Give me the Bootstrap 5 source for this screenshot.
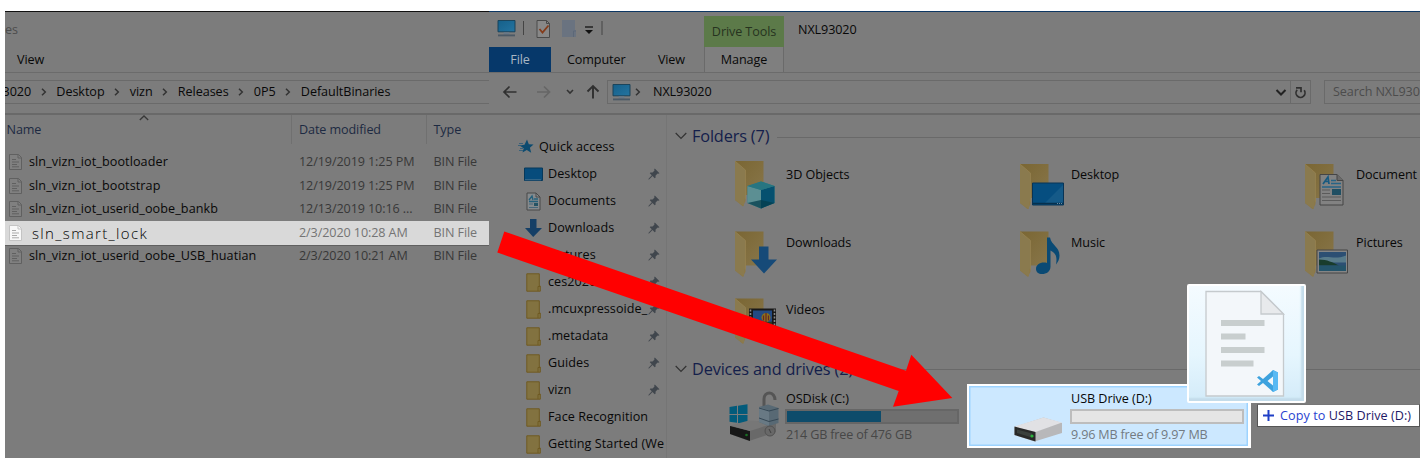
<!DOCTYPE html>
<html lang="en">
<head>
<meta charset="utf-8">
<meta name="viewport" content="width=device-width, initial-scale=1">
<title>Copy file to USB Drive (D:)</title>
<link href="https://cdn.jsdelivr.net/npm/bootstrap@5.3.0/dist/css/bootstrap.min.css" rel="stylesheet">
<style>
  body { background:#fff; font-family:"Open Sans","Noto Sans",sans-serif; font-size:12.6px; letter-spacing:-.1px; line-height:18px; color:#080808; overflow:hidden; white-space:nowrap; }
  svg { display:block; flex:none; }
  .stage { width:1415px; height:447px; margin:11px 0 0 5px; background:#7c7c7c; }
  .win-src { width:484px; border-top:1px solid #111; }
  .win-dst { width:931px; border-top:1px solid #0d3763; }
  .title-row { height:35px; }
  .win-title { margin-left:14px; }
  .tab-row { height:26px; border-bottom:1px solid #6b6b6b; }
  .nav-row { height:42px; padding:7px 0 10px; border-bottom:2px solid #696969; }
  .addr { border:1px solid #6a6a6a; height:24px; }
  .addr-path { width:704px; }
  .addr-search { margin-left:13px; }
  .win-src .addr { border-left:0; border-right:0; width:484px; }
  .crumb { gap:9.600px; letter-spacing:-.05px; }
  .crumb span:first-child { margin-left:-2.5px; }
  .c-dim { color:#4c4c4c; }
  .c-blue { color:#1d2a42; }
  .col-name { width:287px; }
  .col-date { width:134.5px; }
  .cell { padding-left:7px; }
  .head-row { height:29px; }
  .head-row .sep { border-right:1px solid #707070; }
  .head-row .lbl-col { padding-top:6px; }
  .head-row .lbl-name { padding-left:1.5px; }
  .sort-mark { margin:0 0 0 98px; }
  .file-list { padding-top:6.3px; }
  .file-row { height:23.6px; }
  .file-row .col-name { padding-left:4px; gap:7px; }
  .file-row .fname { letter-spacing:.09px; }
  .file-row .fdate, .file-row .ftype { color:#383838; }
  .file-row.picked { background:#d9d9d9; box-shadow:0 1px 0 #606060; }
  .file-row.picked .fdate, .file-row.picked .ftype { color:#747474; }
  .file-row.picked .fname { font-weight:300; font-size:15px; letter-spacing:1.350px; margin-left:3px; color:#000; }
  .tab-file { width:62px; background:#06386a; color:#a9b6c2; }
  .tab-view { margin-right:19px; }
  .drive-tools { width:80px; height:31px; background:#5c7a49; color:#26331f; }
  .tab-manage { width:80px; border-left:1px solid #6a6a6a; border-right:1px solid #6a6a6a; background:#7f7f7f; }
  .tab-fill { width:636px; }
  .side { width:178px; border-right:1px solid #757575; padding-top:18.5px; height:343px; overflow:hidden; letter-spacing:.07px; }
  .side-row { height:27px; padding-left:35px; padding-right:6px; }
  .side-row .ic { width:24px; flex:none; }
  .side-row .ic-fold { margin-left:2px; }
  .side-row.top { padding-left:28px; }
  .group-head { font-size:16.3px; color:#14204b; letter-spacing:-.15px; padding-left:8px; height:42px; }
  .group-head.second { height:18px; }
  .group-head svg { margin-right:5px; }
  .group-head hr { margin:2px 0 0 8px; border-top:1px solid #696969; opacity:1; }
  .tiles { display:grid; grid-template-columns:285px 285px 168px; padding-left:15px; letter-spacing:-.05px; }
  .tiles.drives { margin-top:6.5px; }
  .tile { height:67.5px; padding-left:53px; }
  .tile .lbl { margin-left:3px; padding-top:9px; }
  .drive { height:64px; padding-left:45px; }
  .drive .info { width:175px; margin-left:3px; padding-top:6px; }
  .drive .cap { padding-top:2px; letter-spacing:-.17px; color:#474747; }
  .gauge { height:15px; border:2px solid #666; border-radius:0; background:#6f6f6f; width:174px; margin:1px 0 0 -1px; }
  .gauge > div { background:#0e4c6b; }
  .drive.hot { width:284px; background:#cce8ff; border:2px solid #fff; border-right-width:3px; box-shadow:inset 0 0 0 1.5px #9dd3ff; padding-left:43px; }
  .drive.hot .info { padding-top:4px; }
  .drive.hot .gauge { border-color:#bdbdbd; background:#e5e5e5; }
  .drive.hot .cap { color:#737b82; }
  .arrow-layer { position:absolute; left:0; top:0; pointer-events:none; }
  .ghost { position:absolute; left:1187px; top:284px; width:119px; height:119px; border:2px solid #fff; background:linear-gradient(#f4fbff,#e6f6fe 60%,#d3ebf9); box-shadow:inset -3px -3px 2px #c3dcea; border-radius:2px; }
  .tip { position:absolute; left:1257px; top:404px; width:163px; height:23px; background:#fff; border:1px solid #555; border-top-color:#777; color:#1d1866; gap:5px; padding-left:4px; letter-spacing:.07px; }
  .tip .verb { color:#2943d0; }
</style>
</head>
<body>
<svg width="0" height="0" class="position-absolute">
  <defs>
    <linearGradient id="gf" x1="0" y1="0" x2="1" y2="1"><stop offset="0" stop-color="#7a6633"/><stop offset="1" stop-color="#88764a"/></linearGradient>
    <linearGradient id="gs" x1="0" y1="0" x2="1" y2="1"><stop offset="0" stop-color="#15608a"/><stop offset="1" stop-color="#2474a0"/></linearGradient>
    <symbol id="doc" viewBox="0 0 13 16"><path d="M.5.5h9l3 3v12H.5z" fill="#808080" stroke="#606060"/><path d="M9 .5v3.500h3.500" fill="none" stroke="#606060"/><path d="M3 5.500h4M3 8h7M3 10.500h5M3 12.800h7" stroke="#606060"/></symbol>
    <symbol id="docw" viewBox="0 0 13 16"><path d="M.5.5h9l3 3v12H.5z" fill="#f8f8f8" stroke="#c4c4c4"/><path d="M9 .5v3.500h3.500" fill="none" stroke="#c4c4c4"/><path d="M3 5.500h4M3 8h7M3 10.500h5M3 12.800h7" stroke="#aaa"/></symbol>
    <symbol id="pc" viewBox="0 0 20 18"><path d="M1 .5h18v12H1z" fill="url(#gs)" stroke="#174158"/><path d="M7 13h6v2.500H7z" fill="#697887"/><path d="M1 16.300h18" stroke="#4b5966" stroke-width="2"/></symbol>
    <symbol id="crumbsep" viewBox="0 0 6 8"><path d="M1 .8 4.300 4 1 7.200" fill="none" stroke="#333" stroke-width="1.500"/></symbol>
    <symbol id="pin" viewBox="0 0 12 12"><path d="M6.800.5 11.500 5.200 10.300 5.700 9.600 5.500 7.600 7.600 7.500 9.800 6.700 10.300 4.500 8 1 11.500.4 11.400.6 10.800 3.800 7.300 1.800 5.200 2.400 4.400 4.600 4.400 6.500 2.400 6.200 1.500z" fill="#40464d"/></symbol>
    <symbol id="fold" viewBox="0 0 15 19"><path d="M.8.8h12.500V13h1v5.200H.8z" fill="#827240" stroke="#705a22"/><path d="M12 18v-4.500h2" fill="none" stroke="#6f5a22"/></symbol>
    <symbol id="chev" viewBox="0 0 12 8"><path d="M.7 1 6 6.500 11.300 1" fill="none" stroke="#333" stroke-width="1.200"/></symbol>
    <g id="bigfold"><path d="M0 0h28.500v34H0z" fill="url(#gf)"/><path d="M0 0 10.500 9V40L8 45.500 0 39z" fill="#8c7847"/><path d="M0 0 10.500 9V37l-1.500 1v7L0 39z" fill="#8a7a4e"/><path d="M0 0 10.500 9V38" fill="none" stroke="#968350" stroke-width=".7"/></g>
  </defs>
</svg>

<main class="stage d-flex overflow-hidden">
  <section class="win-src flex-shrink-0">
    <div class="title-row d-flex align-items-center c-dim"><span>es</span></div>
    <div class="tab-row d-flex align-items-center"><span class="ps-2 ms-1">View</span></div>
    <div class="nav-row">
      <div class="addr d-flex align-items-center crumb overflow-hidden">
        <span>3020</span><svg width="6" height="8"><use href="#crumbsep"/></svg>
        <span>Desktop</span><svg width="6" height="8"><use href="#crumbsep"/></svg>
        <span>vizn</span><svg width="6" height="8"><use href="#crumbsep"/></svg>
        <span>Releases</span><svg width="6" height="8"><use href="#crumbsep"/></svg>
        <span>0P5</span><svg width="6" height="8"><use href="#crumbsep"/></svg>
        <span>DefaultBinaries</span>
      </div>
    </div>
    <div class="head-row d-flex c-blue">
      <div class="col-name sep d-flex"><span class="lbl-col lbl-name">Name</span><svg class="sort-mark" width="10" height="6" viewBox="0 0 10 6"><path d="M.8 5 5 1l4.200 4" fill="none" stroke="#383838" stroke-width="1.300"/></svg></div>
      <div class="col-date sep cell lbl-col">Date modified</div>
      <div class="cell lbl-col">Type</div>
    </div>
    <div class="file-list">
      <div class="file-row d-flex align-items-center"><div class="col-name d-flex align-items-center"><svg width="13" height="16"><use href="#doc"/></svg><span class="fname">sln_vizn_iot_bootloader</span></div><div class="col-date fdate cell">12/19/2019 1:25 PM</div><div class="ftype cell">BIN File</div></div>
      <div class="file-row d-flex align-items-center"><div class="col-name d-flex align-items-center"><svg width="13" height="16"><use href="#doc"/></svg><span class="fname">sln_vizn_iot_bootstrap</span></div><div class="col-date fdate cell">12/19/2019 1:25 PM</div><div class="ftype cell">BIN File</div></div>
      <div class="file-row d-flex align-items-center"><div class="col-name d-flex align-items-center"><svg width="13" height="16"><use href="#doc"/></svg><span class="fname">sln_vizn_iot_userid_oobe_bankb</span></div><div class="col-date fdate cell">12/13/2019 10:16 ...</div><div class="ftype cell">BIN File</div></div>
      <div class="file-row picked d-flex align-items-center"><div class="col-name d-flex align-items-center"><svg width="13" height="16"><use href="#docw"/></svg><span class="fname">sln_smart_lock</span></div><div class="col-date fdate cell">2/3/2020 10:28 AM</div><div class="ftype cell">BIN File</div></div>
      <div class="file-row d-flex align-items-center"><div class="col-name d-flex align-items-center"><svg width="13" height="16"><use href="#doc"/></svg><span class="fname">sln_vizn_iot_userid_oobe_USB_huatian</span></div><div class="col-date fdate cell">2/3/2020 10:21 AM</div><div class="ftype cell">BIN File</div></div>
    </div>
  </section>

  <section class="win-dst flex-shrink-0">
    <div class="title-row d-flex align-items-center">
      <svg width="215" height="35" viewBox="0 0 215 35">
        <use href="#pc" x="8" y="8" width="19" height="17"/>
        <path d="M34.500 9v14M113 9v14" stroke="#444"/>
        <path d="M48 8.500h9.500l3 3v14H48z" fill="#888" stroke="#4a4a4a"/><path d="M57.500 8.500v3h3" fill="none" stroke="#4a4a4a"/><path d="m50.500 17 3 3.500 6-7" fill="none" stroke="#843c1b" stroke-width="1.800"/>
        <path d="M73 8h13v10h1v7H73z" fill="#6a7380"/><path d="M84.500 25v-6H87" fill="none" stroke="#5c6878"/>
        <path d="M96 15h8" stroke="#111" stroke-width="1.300"/><path d="M96 18h8l-4 4z" fill="#111"/>
      </svg>
      <div class="drive-tools d-flex align-items-center justify-content-center mt-auto">Drive Tools</div>
      <span class="win-title">NXL93020</span>
    </div>
    <div class="tab-row d-flex">
      <div class="tab-file d-flex align-items-center justify-content-center">File</div>
      <div class="d-flex align-items-center ps-3">Computer</div>
      <div class="tab-view d-flex align-items-center ms-auto">View</div>
      <div class="tab-manage d-flex align-items-center justify-content-center">Manage</div>
      <div class="tab-fill"></div>
    </div>
    <div class="nav-row d-flex">
      <svg width="118" height="24" viewBox="0 0 118 24"><path d="M27.500 12H15m5.500-5.500L15 12l5.500 5.500" fill="none" stroke="#303030" stroke-width="1.700"/><path d="M48 12h12.500M55 6.500l5.500 5.500-5.500 5.500" fill="none" stroke="#666" stroke-width="1.700"/><path d="m78 10 3 3 3-3" fill="none" stroke="#333" stroke-width="1.600"/><path d="M104 18.500V6m-5.500 5.500L104 6l5.500 5.500" fill="none" stroke="#303030" stroke-width="1.900"/></svg>
      <div class="addr addr-path d-flex align-items-center flex-shrink-0">
        <svg width="19" height="17" class="ms-1 me-1"><use href="#pc"/></svg><svg class="me-2" width="6" height="8"><use href="#crumbsep"/></svg><span class="ps-1">NXL93020</span>
        <svg class="ms-auto" width="40" height="22" viewBox="0 0 40 22"><path d="m6.500 9 4.500 4.500L15.500 9" fill="none" stroke="#222" stroke-width="2"/><path d="M20.500 0v22" stroke="#6a6a6a"/><path d="M27.200 8.800A4.500 4.500 0 1 0 34.200 9.300" fill="none" stroke="#303030" stroke-width="1.700"/><path d="M26 6.800h5v4.500" fill="none" stroke="#303030" stroke-width="1.700"/></svg>
      </div>
      <div class="addr addr-search flex-grow-1 ps-2 d-flex align-items-center c-dim border-end-0">Search NXL930</div>
    </div>
    <div class="d-flex">
      <nav class="side flex-shrink-0">
        <div class="side-row top d-flex align-items-center"><svg width="22" height="16" viewBox="0 0 22 16"><path d="m10 .5 1.800 4.800 4.700.2-3.600 3.300 1.300 5-4.400-2.900-4.300 2.600 1.200-4.300L2.500 6.500l5-.8z" fill="#0c4b70"/><path d="M2 4.500h4M1 6.500h4M3 9.500h3M2 11.500h4" stroke="#2a5b78" stroke-width=".8"/></svg>Quick access</div>
        <div class="side-row d-flex align-items-center"><span class="ic"><svg width="19" height="15" viewBox="0 0 19 15"><path d="M.5 1h18v12.500H.5z" fill="#074c7c" stroke="#06385a"/><path d="M1 12.800h16" stroke="#47718c"/></svg></span>Desktop<svg class="ms-auto" width="12" height="12"><use href="#pin"/></svg></div>
        <div class="side-row d-flex align-items-center"><span class="ic"><svg width="17" height="19" viewBox="0 0 17 19"><path d="M3 1h9l4 4v13H3z" fill="#858a8d" stroke="#484848"/><path d="M12 1v4h4" fill="none" stroke="#484848"/><path d="m5 8 3-4 1 4M10 7h4M5 9.500h9" fill="none" stroke="#24607b" stroke-width="1.400"/><path d="M5 12h4M5 15.500h9" stroke="#47677a"/><path d="M10 11h4v3h-4z" fill="#245365"/></svg></span>Documents<svg class="ms-auto" width="12" height="12"><use href="#pin"/></svg></div>
        <div class="side-row d-flex align-items-center"><span class="ic"><svg width="19" height="18" viewBox="0 0 19 18"><path d="M6 0h6.500v9H18l-8.800 9L1 9h5z" fill="#153f66"/></svg></span>Downloads<svg class="ms-auto" width="12" height="12"><use href="#pin"/></svg></div>
        <div class="side-row d-flex align-items-center"><span class="ic"></span>Pictures<svg class="ms-auto" width="12" height="12"><use href="#pin"/></svg></div>
        <div class="side-row d-flex align-items-center"><span class="ic"><svg class="ic-fold" width="15" height="19"><use href="#fold"/></svg></span>ces2020<svg class="ms-auto" width="12" height="12"><use href="#pin"/></svg></div>
        <div class="side-row d-flex align-items-center"><span class="ic"><svg class="ic-fold" width="15" height="19"><use href="#fold"/></svg></span>.mcuxpressoide_<svg class="ms-auto" width="12" height="12"><use href="#pin"/></svg></div>
        <div class="side-row d-flex align-items-center"><span class="ic"><svg class="ic-fold" width="15" height="19"><use href="#fold"/></svg></span>.metadata<svg class="ms-auto" width="12" height="12"><use href="#pin"/></svg></div>
        <div class="side-row d-flex align-items-center"><span class="ic"><svg class="ic-fold" width="15" height="19"><use href="#fold"/></svg></span>Guides<svg class="ms-auto" width="12" height="12"><use href="#pin"/></svg></div>
        <div class="side-row d-flex align-items-center"><span class="ic"><svg class="ic-fold" width="15" height="19"><use href="#fold"/></svg></span>vizn<svg class="ms-auto" width="12" height="12"><use href="#pin"/></svg></div>
        <div class="side-row d-flex align-items-center"><span class="ic"><svg class="ic-fold" width="15" height="19"><use href="#fold"/></svg></span>Face Recognition</div>
        <div class="side-row d-flex align-items-center"><span class="ic"><svg class="ic-fold" width="15" height="19"><use href="#fold"/></svg></span>Getting Started (We</div>
      </nav>

      <div class="flex-grow-1">
        <div class="group-head d-flex align-items-center"><svg width="12" height="8"><use href="#chev"/></svg><span>Folders (7)</span><hr class="flex-grow-1"></div>
        <div class="tiles">
          <div class="tile d-flex"><svg width="48" height="52" viewBox="0 -4 48 52"><use href="#bigfold"/><path d="M26 20.500 39.500 25v17L26 47.500 12.500 42V25z" fill="#2d7c86"/><path d="M12.500 25 26 29v18.500L12.500 42z" fill="#5c8f93"/><path d="M26 29 39.500 25v17L26 47.500z" fill="#06506f"/><path d="M26 20.500 39.500 25 26 29l-13.500-4z" fill="#277581"/><path d="m12.500 42 13.500-3 13.500 3L26 47.500z" fill="#043d4c" opacity=".75"/></svg><span class="lbl">3D Objects</span></div>
          <div class="tile d-flex"><svg width="48" height="52" viewBox="0 -7 48 52"><use href="#bigfold"/><path d="M12.500 19h31v22h-31z" fill="#064e80" stroke="#083456"/><path d="M24 40 43 21v19z" fill="#155a88"/><path d="M13 39.500h30" stroke="#06304d" stroke-width="1.500"/><path d="M37 39.500h5" stroke="#6d8da3" stroke-dasharray="1 1"/></svg><span class="lbl">Desktop</span></div>
          <div class="tile d-flex"><svg width="48" height="52" viewBox="0 -7 48 52"><use href="#bigfold"/><path d="M15 10.500h17l6 6V41H15z" fill="#828282" stroke="#454545"/><path d="M32 10.500v6h6" fill="#6a6a6a" stroke="#454545"/><path d="m18 20 5-7 1 7m-4-2.500h4" fill="none" stroke="#185a80" stroke-width="1.700"/><path d="M26 16.500h5M26 19.500h10M17 23h19" stroke="#276486" stroke-width="1.300"/><path d="M27 25h9v6h-9z" fill="#204f63"/><path d="M17 26h8M17 29.500h8M17 33h19M17 36.500h19" stroke="#5b5b5b"/></svg><span class="lbl">Document</span></div>
          <div class="tile d-flex"><svg width="48" height="52" viewBox="0 -6.500 48 52"><use href="#bigfold"/><path d="M24 15h9.500v13H42L29 42 16 28h8z" fill="#164a78"/></svg><span class="lbl">Downloads</span></div>
          <div class="tile d-flex"><svg width="48" height="52" viewBox="0 -6.500 48 52"><use href="#bigfold"/><path d="M27 6h3c1.500 8 9.500 9 9.500 18 0 4-1.500 6-3.500 9 1-6 1-11-5.500-14v16c0 5-4 7.500-8.500 7.500-3.500 0-6-2-6-5 0-4.500 5-7.500 11-6z" fill="#0a4a74"/></svg><span class="lbl">Music</span></div>
          <div class="tile d-flex"><svg width="48" height="52" viewBox="0 -6.500 48 52"><use href="#bigfold"/><path d="M12 18.500h30.500v23H12z" fill="#858585" stroke="#454545"/><path d="M14 20.500h27v19H14z" fill="#2c4f73"/><path d="M14 27c9-4 15 2 27-3v7H14z" fill="#587b8a"/><path d="M14 28c8 0 14 3 20 6H14z" fill="#193c2c"/><path d="M14 34h27v5.500H14z" fill="#24546a"/></svg><span class="lbl">Pictures</span></div>
          <div class="tile d-flex"><svg width="48" height="52" viewBox="0 -6.500 48 52"><use href="#bigfold"/><path d="M14 10h27v22H14z" fill="#181818"/><path d="M18 12h19v17H18z" fill="#234a82"/><path d="M15.500 11v20M39.500 11v20" stroke="#888" stroke-width="1.600" stroke-dasharray="2 1.500"/><circle cx="31" cy="19" r="4.500" fill="#8a721c"/><path d="M28.500 17v5M31 14.500v9M33.500 17v5" stroke="#6a2424" stroke-width="1.200"/><path d="M18 25c6-5 10 0 19-2v6H18z" fill="#243c24"/></svg><span class="lbl">Videos</span></div>
        </div>
        <div class="group-head second d-flex align-items-center"><svg width="12" height="8"><use href="#chev"/></svg><span>Devices and drives (2)</span><hr class="flex-grow-1"></div>
        <div class="tiles drives">
          <div class="drive d-flex">
            <svg width="56" height="64" viewBox="0 0 56 64"><path d="M2.500 23 10 21.800V30H2.500zM11 21.700l9.500-1.500V30H11zM2.500 31H10v7.800l-7.500-1zM11 31h9.500v9L11 39z" fill="#035b7b"/><path d="m3 42 20-5 26 1v10L22 57 3 50z" fill="#696969"/><path d="m3 42 20 5v10L3 50z" fill="#171717"/><path d="m3 41.500 19-5 27 2-26 8.500z" fill="#777"/><circle cx="19.500" cy="51" r="1.300" fill="#197023"/><path d="M37 23v-8c0-4 2.500-6 5.500-6s5.500 3 5.500 7" fill="none" stroke="#555" stroke-width="3"/><path d="m32 23 9-2.500 10.500 3.500v15L42 42l-10-4z" fill="#586974"/><path d="m32 23 10 3.500V42l-10-4z" fill="#687984"/><path d="m32 24 10 3 9.500-2.500M32 34l10 3.500 9.500-2.500" fill="none" stroke="#354754"/><circle cx="43" cy="47" r="5" fill="#686868" stroke="#515151"/><path d="m42 45 2 4" stroke="#3f3f3f"/></svg>
            <div class="info"><div>OSDisk (C:)</div><div class="progress gauge"><div style="width:55%"></div></div><div class="cap">214 GB free of 476 GB</div></div>
          </div>
          <div class="drive hot d-flex">
            <svg width="56" height="60" viewBox="0 2 56 60"><path d="m2.500 43 29-9.500L50 39v10L22.500 57.500 2.500 51z" fill="#b8b8ba"/><path d="m2.500 42.500 29-9L50 38.500 23.500 48z" fill="#e1e1e4"/><path d="m2.500 42.500 21 5.500v9.500l-21-6.500z" fill="#292929"/><path d="m5 45.500 15 4v4L5 49z" fill="#3b403d"/><circle cx="20" cy="52" r="1.600" fill="#2ab53a"/></svg>
            <div class="info"><div>USB Drive (D:)</div><div class="progress gauge"><div></div></div><div class="cap">9.96 MB free of 9.97 MB</div></div>
          </div>
        </div>
      </div>
    </div>
  </section>
</main>

<svg class="arrow-layer" width="1427" height="471" viewBox="0 0 1427 471"><path d="M504.300 231.500 906 370.700 911.300 354.800 952.300 398 893 406.700 898.700 391 497.300 252.500z" fill="#f00"/></svg>

<div class="ghost"><svg width="115" height="115" viewBox="0 0 115 115"><path d="M17 5.500h55l22.500 22.500v82H17z" fill="#f3f7fa" stroke="#c5cacd" stroke-width="1.300"/><path d="M72 5.500v22.500h22.500z" fill="#e8eaec" stroke="#c5cacd" stroke-width="1.300"/><path d="M32 37h43.500M32 50.500h24.500M32 64h43.500M32 77.500h32.500" stroke="#c8cece" stroke-width="6"/><path d="m84 84 5 2.500v17L84 106 74 97l-4 3-2-1.500 4-3.500-4-3.500 2-1.500 4 3zM84 90.500 78.500 95l5.500 4.500z" fill="#3da2de" fill-rule="evenodd"/><path d="m84 84 5 2.500v17L84 106z" fill="#58b9f3"/></svg></div>
<div class="tip d-flex align-items-center"><svg width="13" height="13" viewBox="0 0 13 13"><path d="M6.500 1v11M1 6.500h11" stroke="#1f3fc6" stroke-width="2"/></svg><span><span class="verb">Copy to</span> USB Drive (D:)</span></div>
</body>
</html>
